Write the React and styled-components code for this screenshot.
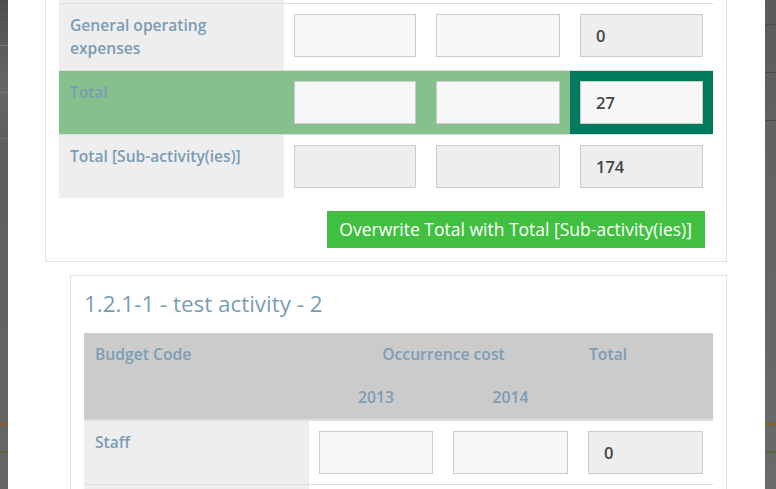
import React from 'react';
import styled, { createGlobalStyle, css } from 'styled-components';

const GlobalStyle = createGlobalStyle`
  html, body {
    margin: 0;
    padding: 0;
    background: #5a5a5a;
    overflow: hidden;
  }
  body {
    font-family: "Open Sans", "Liberation Sans", Arial, sans-serif;
  }
  * { box-sizing: border-box; }
`;

const Page = styled.div`
  display: flex;
  height: 489px;
  width: 776px;
  overflow: hidden;
`;

const leftLines = css`
  background:
    linear-gradient(#8a5c14, #8a5c14) 0 423px / 100% 2px no-repeat,
    linear-gradient(#57693f, #57693f) 0 451px / 100% 2px no-repeat,
    linear-gradient(#747474, #747474) 0 45px / 100% 1px no-repeat,
    linear-gradient(#727272, #727272) 0 92px / 100% 1px no-repeat,
    linear-gradient(#707070, #707070) 0 138px / 100% 1px no-repeat,
    linear-gradient(to bottom, #4c4c4c 0, #5c5c5c 45px, #666 92px, #5e5e5e 138px, #666 489px);
`;

const rightLines = css`
  background:
    linear-gradient(#8a5c14, #8a5c14) 0 423px / 100% 2px no-repeat,
    linear-gradient(#57693f, #57693f) 0 451px / 100% 2px no-repeat,
    linear-gradient(#4a4a4a, #4a4a4a) 0 24px / 100% 1px no-repeat,
    linear-gradient(#4a4a4a, #4a4a4a) 0 72px / 100% 1px no-repeat,
    linear-gradient(#4a4a4a, #4a4a4a) 0 120px / 100% 1px no-repeat,
    linear-gradient(to bottom, #5a5a5a 0, #616161 120px, #6a6a6a 489px);
`;

const Side = styled.div`
  flex: 0 0 ${(p) => p.$w}px;
  height: 100%;
  ${(p) => (p.$side === 'left' ? leftLines : rightLines)}
`;

const Modal = styled.div`
  flex: 0 0 757px;
  height: 100%;
  background: #fff;
  overflow: hidden;
`;

// the modal is scrolled: only the last 3px of the row above are visible
const ModalBody = styled.div`
  margin-top: -75px;
`;

const Panel = styled.div`
  margin-left: ${(p) => p.$indent}px;
  width: ${(p) => 719 - p.$indent}px;
  border: 1px solid #dbe2ea;
  background: #fff;
  padding: 13px;
  & + & {
    margin-top: 13px;
  }
`;

const Heading = styled.h3`
  margin: 0 0 14px;
  font-size: 22.4px;
  line-height: 30px;
  font-weight: 400;
  color: #7a9db6;
`;

const Table = styled.table`
  width: 100%;
  border-collapse: collapse;
  table-layout: fixed;
`;

const Th = styled.th`
  background: #cbcbcb;
  color: #7c9db5;
  font-size: 15.7px;
  line-height: 23px;
  font-weight: 600;
  padding: 10px 11px;
  vertical-align: top;
  text-align: ${(p) => p.$align || 'left'};
  ${(p) => p.$last && 'border-bottom: 2px solid #ddd;'}
`;

const Row = styled.tr`
  border-top: 1px solid #ddd;
  ${(p) => p.$end && 'border-bottom: 1px solid #ddd;'}
`;

const Label = styled.td`
  background: ${(p) => (p.$total ? '#86c18d' : '#eee')};
  color: #7b9cb5;
  font-size: 15.6px;
  line-height: 23px;
  font-weight: 600;
  padding: 10px 11px;
  vertical-align: top;
`;

const Cell = styled.td`
  padding: 10px;
  vertical-align: top;
  background: ${(p) => (p.$dark ? '#007a5d' : p.$total ? '#86c18d' : 'transparent')};
`;

const Input = styled.input`
  display: block;
  width: 100%;
  height: 43px;
  border: 1px solid #ccc;
  border-radius: 0;
  background: ${(p) => (p.readOnly ? '#eeeeee' : '#f7f7f7')};
  padding: 0 15px;
  font-family: "Open Sans", "Liberation Sans", Arial, sans-serif;
  font-size: 16.5px;
  font-weight: 600;
  color: #454545;
  outline: none;
`;

const Actions = styled.div`
  display: flex;
  justify-content: flex-end;
  padding: 13px 8px 0 0;
`;

const GreenButton = styled.button`
  border: none;
  border-radius: 0;
  background: #41bf41;
  color: #fff;
  font-family: "Open Sans", "Liberation Sans", Arial, sans-serif;
  font-size: 17.5px;
  line-height: 23px;
  padding: 7px 13px 7px 12px;
  cursor: pointer;
`;

function BudgetRow({ label, values, total, end }) {
  return (
    <Row $end={end}>
      <Label $total={total}>{label}</Label>
      {values.map((v, i) => (
        <Cell key={i} $total={total && i < 2} $dark={total && i === 2}>
          <Input readOnly={v.ro} defaultValue={v.value ?? ''} />
        </Cell>
      ))}
    </Row>
  );
}

export default function App() {
  return (
    <>
      <GlobalStyle />
      <Page>
        <Side $side="left" $w={8} />
        <Modal>
          <ModalBody>
            <Panel $indent={37}>
              <Table>
                <colgroup>
                  <col style={{ width: 225 }} />
                  <col style={{ width: 142 }} />
                  <col style={{ width: 144 }} />
                  <col style={{ width: 143 }} />
                </colgroup>
                <tbody>
                  <BudgetRow label="" values={[{}, {}, { ro: true }]} />
                  <BudgetRow
                    label="General operating expenses"
                    values={[{}, {}, { ro: true, value: '0' }]}
                  />
                  <BudgetRow
                    label="Total"
                    total
                    values={[{}, {}, { value: '27' }]}
                  />
                  <BudgetRow
                    label="Total [Sub-activity(ies)]"
                    values={[{ ro: true }, { ro: true }, { ro: true, value: '174' }]}
                  />
                </tbody>
              </Table>
              <Actions>
                <GreenButton>Overwrite Total with Total [Sub-activity(ies)]</GreenButton>
              </Actions>
            </Panel>
            <Panel $indent={62}>
              <Heading>1.2.1-1 - test activity - 2</Heading>
              <Table>
                <colgroup>
                  <col style={{ width: 225 }} />
                  <col style={{ width: 134 }} />
                  <col style={{ width: 135 }} />
                  <col style={{ width: 135 }} />
                </colgroup>
                <thead>
                  <tr>
                    <Th rowSpan={2} $last>Budget Code</Th>
                    <Th colSpan={2} $align="center">Occurrence cost</Th>
                    <Th rowSpan={2} $last>Total</Th>
                  </tr>
                  <tr>
                    <Th $align="center" $last>2013</Th>
                    <Th $align="center" $last>2014</Th>
                  </tr>
                </thead>
                <tbody>
                  <BudgetRow
                    label="Staff"
                    end
                    values={[{}, {}, { ro: true, value: '0' }]}
                  />
                  <BudgetRow label="" values={[{}, {}, { ro: true }]} />
                </tbody>
              </Table>
            </Panel>
          </ModalBody>
        </Modal>
        <Side $side="right" $w={11} />
      </Page>
    </>
  );
}
